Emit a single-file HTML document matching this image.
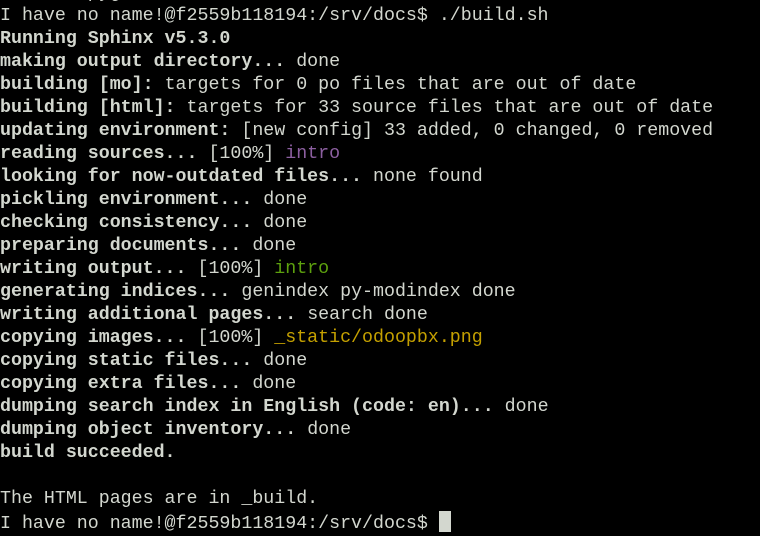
<!DOCTYPE html>
<html><head><meta charset="utf-8"><style>
html,body{margin:0;padding:0;background:#000;width:760px;height:532px;overflow:hidden}
pre{position:absolute;left:0;top:-18px;margin:0;font-family:"Liberation Mono",monospace;font-size:18.3px;line-height:22.98px;color:#d3d7cf;letter-spacing:0}
b{font-weight:bold}
.p{color:#8c5fa0}.g{color:#5ca00e}.y{color:#c4a000}
.cur{display:inline-block;width:12px;height:21px;background:#d3d7cf;vertical-align:-4px}
</style></head><body><pre>        pyg           _
I have no name!@f2559b118194:/srv/docs$ ./build.sh
<b>Running Sphinx v5.3.0</b>
<b>making output directory...</b> done
<b>building [mo]:</b> targets for 0 po files that are out of date
<b>building [html]:</b> targets for 33 source files that are out of date
<b>updating environment:</b> [new config] 33 added, 0 changed, 0 removed
<b>reading sources...</b> [100%] <span class="p">intro</span>
<b>looking for now-outdated files...</b> none found
<b>pickling environment...</b> done
<b>checking consistency...</b> done
<b>preparing documents...</b> done
<b>writing output...</b> [100%] <span class="g">intro</span>
<b>generating indices...</b> genindex py-modindex done
<b>writing additional pages...</b> search done
<b>copying images...</b> [100%] <span class="y">_static/odoopbx.png</span>
<b>copying static files...</b> done
<b>copying extra files...</b> done
<b>dumping search index in English (code: en)...</b> done
<b>dumping object inventory...</b> done
<b>build succeeded.</b>

The HTML pages are in _build.
I have no name!@f2559b118194:/srv/docs$ <span class="cur"></span></pre></body></html>
